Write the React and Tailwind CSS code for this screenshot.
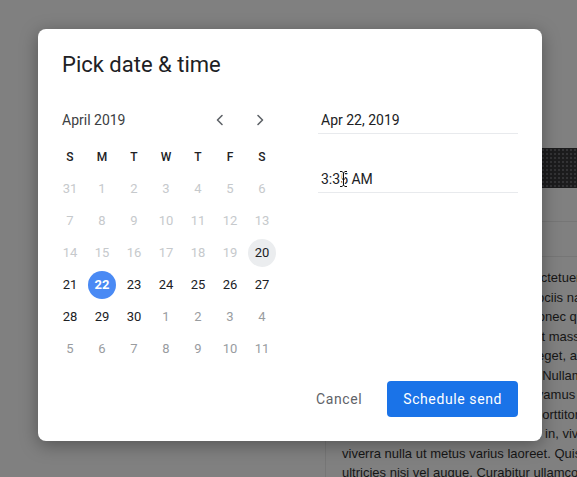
import React from "react";

const weekdays = ["S", "M", "T", "W", "T", "F", "S"];

// tone: "off" = past / not selectable, "on" = selectable, "next" = next month
const weeks = [
    [[31, "off"], [1, "off"], [2, "off"], [3, "off"], [4, "off"], [5, "off"], [6, "off"]],
    [[7, "off"], [8, "off"], [9, "off"], [10, "off"], [11, "off"], [12, "off"], [13, "off"]],
    [[14, "off"], [15, "off"], [16, "off"], [17, "off"], [18, "off"], [19, "off"], [20, "today"]],
    [[21, "on"], [22, "selected"], [23, "on"], [24, "on"], [25, "on"], [26, "on"], [27, "on"]],
    [[28, "on"], [29, "on"], [30, "on"], [1, "next"], [2, "next"], [3, "next"], [4, "next"]],
    [[5, "next"], [6, "next"], [7, "next"], [8, "next"], [9, "next"], [10, "next"], [11, "next"]],
];

const lines = [
    "Lorem ipsum dolor sit amet, consectetuer adipiscing elit. Aenean commodo ligula",
    "eget dolor. Aenean massa. Cum sociis natoque penatibus et magnis dis parturient",
    "montes, nascetur ridiculus mus. Donec quam felis, ultricies nec, pellentesque eu,",
    "pretium quis, sem. Nulla consequat massa quis enim. Donec pede justo,",
    "fringilla vel, aliquet nec, vulputate eget, arcu. In enim justo, rhoncus ut,",
    "imperdiet a, venenatis vitae, justo. Nullam dictum felis eu pede mollis pretium.",
    "Integer tincidunt. Cras dapibus. Vivamus elementum semper nisi. Aenean vulputate",
    "eleifend tellus. Aenean leo ligula, porttitor eu, consequat vitae, eleifend ac,",
    "enim. Aliquam lorem ante, dapibus in, viverra quis, feugiat a, tellus. Phasellus",
    "viverra nulla ut metus varius laoreet. Quisque rutrum. Aenean imperdiet. Etiam",
    "ultricies nisi vel augue. Curabitur ullamcorper ultricies nisi. Nam eget dui.",
];

const Chevron = ({ dir }) => (
    <svg width="16" height="16" viewBox="0 0 16 16" fill="none">
        <polyline
            points={dir === "left" ? "10,3.5 5.5,8 10,12.5" : "6,3.5 10.5,8 6,12.5"}
            stroke="#5f6368"
            strokeWidth="1.6"
            strokeLinecap="round"
            strokeLinejoin="round"
        />
    </svg>
);

const Day = ({ n, tone }) => {
    if (tone === "selected") {
        return (
            <div className="w-8 h-8 flex items-center justify-center">
                <div className="w-7 h-7 rounded-full bg-[#4a8af4] text-white font-bold flex items-center justify-center">{n}</div>
            </div>
        );
    }
    if (tone === "today") {
        return (
            <div className="w-8 h-8 flex items-center justify-center">
                <div className="w-7 h-7 rounded-full bg-[#ebedef] text-[#202124] flex items-center justify-center">{n}</div>
            </div>
        );
    }
    const color = tone === "off" ? "text-[#c6c9cc]" : tone === "next" ? "text-[#999c9f]" : "text-[#202124]";
    return <div className={`w-8 h-8 flex items-center justify-center ${color}`}>{n}</div>;
};

const App = () => {
    return (
        <div className="relative w-[577px] h-[477px] overflow-hidden bg-[#808080] font-['Roboto',sans-serif]">
            {/* page behind the dimmed overlay */}
            <div className="flex h-full">
                <div className="w-[325px] shrink-0" />
                <div className="flex-1 flex flex-col min-h-0">
                    <div className="h-[148px] shrink-0" />
                    <div className="h-10 shrink-0 bg-[#1c1c1d] bg-[radial-gradient(#333335_0.8px,transparent_0.8px)] bg-[size:4px_4px]" />
                    <div className="h-[34px] shrink-0 border-b border-[#767676]" />
                    <div className="h-[35px] shrink-0 border-b border-[#767676]" />
                    <div className="flex-1 min-h-0 overflow-hidden border-l border-[#767676] pl-[16px] pt-[11px] font-['Liberation_Sans',Arial,sans-serif] text-[13px] leading-[19.5px] text-[#161616]">
                        {lines.map((l, i) => (
                            <p key={i} className="whitespace-nowrap">{l}</p>
                        ))}
                    </div>
                </div>
            </div>

            {/* dialog */}
            <div className="absolute left-[38px] top-[29px] w-[504px] rounded-lg bg-white shadow-[0_4px_18px_rgba(0,0,0,0.35)] pt-[22px] pb-6">
                <h2 className="px-6 text-[22px] leading-7 text-[#202124]">Pick date &amp; time</h2>

                <div className="mt-[25px] flex pl-4 pr-6">
                    <div className="w-[224px]">
                        <div className="h-8 flex items-center justify-between">
                            <span className="pl-2 text-[14px] text-[#3c4043]">April 2019</span>
                            <div className="flex gap-2 pr-[2px]">
                                <button className="w-8 h-8 flex items-center justify-center"><Chevron dir="left" /></button>
                                <button className="w-8 h-8 flex items-center justify-center"><Chevron dir="right" /></button>
                            </div>
                        </div>
                        <div className="mt-[5px] grid grid-cols-7 text-[12px] font-medium text-[#202124]">
                            {weekdays.map((d, i) => (
                                <div key={i} className="w-8 h-8 flex items-center justify-center">{d}</div>
                            ))}
                        </div>
                        <div className="text-[13px]">
                            {weeks.map((w, i) => (
                                <div key={i} className="grid grid-cols-7">
                                    {w.map(([n, tone], j) => (
                                        <Day key={j} n={n} tone={tone} />
                                    ))}
                                </div>
                            ))}
                        </div>
                    </div>

                    <div className="ml-10 flex-1 text-[14px] text-[#202124]">
                        <div className="pt-[6px] pb-[3px] px-[3px] leading-5 border-b border-[#e8eaed]">Apr 22, 2019</div>
                        <div className="relative mt-[35px] pb-[3px] px-[3px] leading-5 border-b border-[#e8eaed]">
                            3:35 AM
                            <svg className="absolute left-[21px] top-[1px]" width="9" height="18" viewBox="0 0 9 18">
                                <path d="M1 1.5h2.2L4.5 3l1.3-1.5H8M4.5 3v12M1 16.5h2.2L4.5 15l1.3 1.5H8M3 9h3" stroke="#fff" strokeWidth="2.6" fill="none" />
                                <path d="M1 1.5h2.2L4.5 3l1.3-1.5H8M4.5 3v12M1 16.5h2.2L4.5 15l1.3 1.5H8M3 9h3" stroke="#111" strokeWidth="1" fill="none" />
                            </svg>
                        </div>
                    </div>
                </div>

                <div className="mt-4 px-6 flex justify-end items-center gap-[9px]">
                    <button className="h-9 px-4 text-[14px] tracking-[0.6px] text-[#5f6368]">Cancel</button>
                    <button className="h-9 px-4 rounded bg-[#1a73e8] text-[14px] tracking-[0.6px] text-white">Schedule send</button>
                </div>
            </div>
        </div>
    );
};

export default App;
